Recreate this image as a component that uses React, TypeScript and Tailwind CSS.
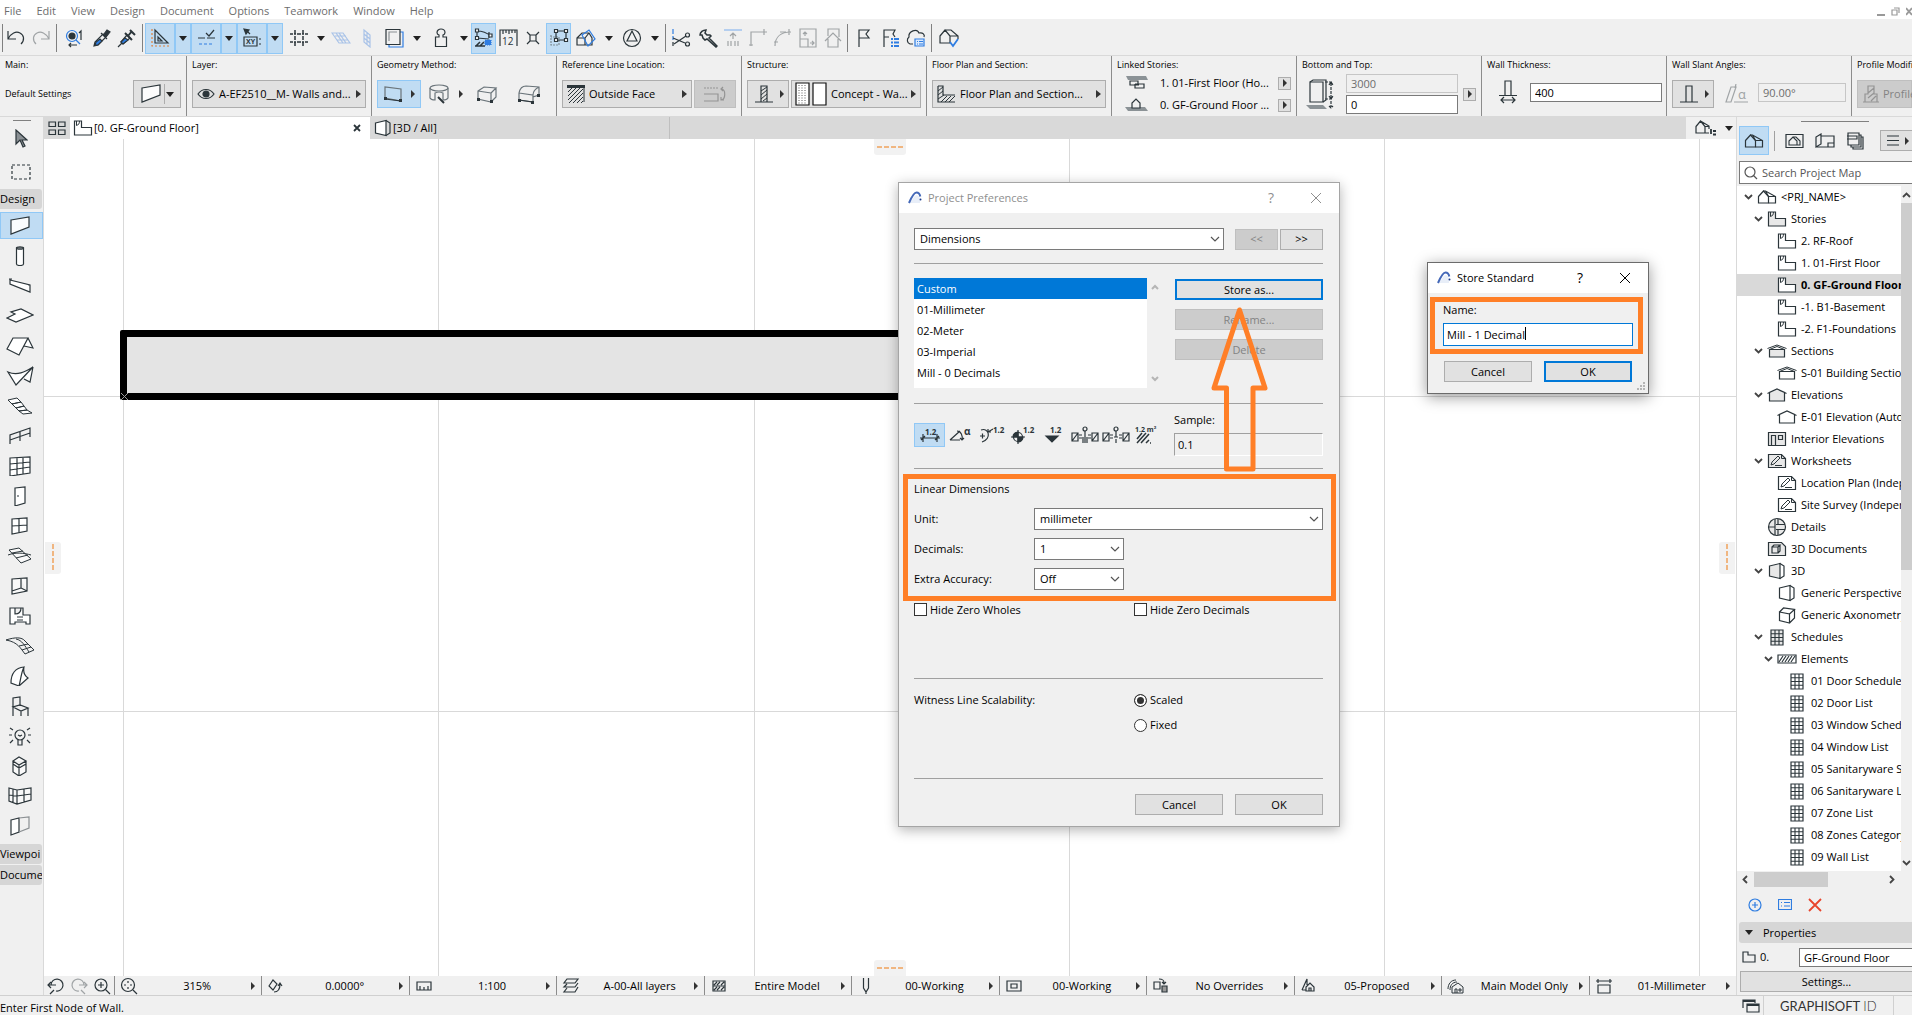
import React, { useState } from 'react';

const INK = '#2b353a';
const BLUE = '#2f7de1';
const PALE = '#a0a4a6';

interface IcoProps {
  w?: number;
  h?: number;
  color?: string;
  children: React.ReactNode;
}

const Ico: React.FC<IcoProps> = ({ w = 22, h = 20, color = INK, children }) => (
  <svg
    width={w}
    height={h}
    viewBox={`0 0 ${w} ${h}`}
    fill="none"
    stroke={color}
    strokeWidth={1.2}
    className="shrink-0"
    aria-hidden="true"
  >
    {children}
  </svg>
);

const Down = () => (
  <Ico w={8} h={5}><path d="M0 0h8L4 5z" fill="#222" stroke="none" /></Ico>
);

const Right = ({ small = false }: { small?: boolean }) => (
  <Ico w={small ? 4 : 5} h={8}><path d={small ? 'M0 0l4 4-4 4z' : 'M0 0l5 4-5 4z'} fill="#333" stroke="none" /></Ico>
);

const Chevron = () => (
  <Ico w={10} h={6} color="#555"><path d="M1 1l4 4 4-4" /></Ico>
);

/* ---------- shared drawings ---------- */

const StoryIcon = ({ shade = false }: { shade?: boolean }) => (
  <Ico w={20} h={18}>
    <path d="M1.500 2h7v6.500h10v7.500h-17z" fill={shade ? '#e8e8e8' : '#fff'} />
    <path d="M3.500 2v4.500c2-.5 3-2 3-4.500" strokeWidth={1} />
  </Ico>
);

const HouseIcon = () => (
  <Ico w={20} h={16}>
    <path d="M1.500 7.500L6.500 2l5 5.500v6.500h-10z" />
    <path d="M6.500 2h2l10 5.500v6.500h-7M8.500 2l3 5.500h7" />
  </Ico>
);

const SectionIcon = ({ shade = false }: { shade?: boolean }) => (
  <Ico w={20} h={16}>
    <path d="M2.500 6.500h15v7.500h-15z" fill={shade ? '#e8e8e8' : '#fff'} />
    <path d="M.5 5.500L10 2l9.500 3.500" strokeWidth={1} />
    <path d="M2.500 6.500L10 3.500l7.500 3" strokeWidth={1} />
  </Ico>
);

const ElevationIcon = ({ shade = false }: { shade?: boolean }) => (
  <Ico w={20} h={16}>
    <path d="M2.500 14V5.500L10 2l7.500 3.500V14z" fill={shade ? '#e8e8e8' : '#fff'} />
    <path d="M.5 6.500l2-1M19.500 6.500l-2-1" />
  </Ico>
);

const InteriorIcon = () => (
  <Ico w={20} h={16}>
    <path d="M1.500 1.500h17v13h-17z" fill="#e8e8e8" />
    <path d="M4.500 14V4.500h4V14M11.500 4.500h4v4h-4z" />
  </Ico>
);

const SheetIcon = ({ shade = false }: { shade?: boolean }) => (
  <Ico w={20} h={16}>
    <path d="M1.500 1.500h13l4 4v9h-17z" fill={shade ? '#e8e8e8' : '#fff'} />
    <path d="M14.500 1.500v4h4M4 12l1-3 6-6 2 2-6 6zM8 12.500h7" strokeWidth={1} />
  </Ico>
);

const DetailIcon = () => (
  <Ico w={20} h={20}>
    <circle cx="10" cy="10" r="8.500" fill="#e8e8e8" />
    <path d="M8 2v16M11 2v5M11 13v5M2 10h6M9 7.500h9M9 12.500h9" />
  </Ico>
);

const Doc3dIcon = () => (
  <Ico w={20} h={16}>
    <path d="M1.500 1.500h13l4 4v9h-17z" fill="#e8e8e8" />
    <path d="M5 6h6v6H5zM5 6l2-2h6l-2 2M13 4v6l-2 2" />
  </Ico>
);

const PerspectiveIcon = ({ shade = false }: { shade?: boolean }) => (
  <Ico w={20} h={18}>
    <path d="M2.500 4L13 1.500v15L2.500 14z" fill={shade ? '#e8e8e8' : '#fff'} />
    <path d="M13 1.500L17 4v10l-4 2.500" />
  </Ico>
);

const AxoIcon = () => (
  <Ico w={20} h={18}>
    <path d="M2.500 6l10 2v9l-10-2.500zM2.500 6l4-4 11 1.500-5 4.500M17.500 3.500V12l-5 5" fill="#fff" />
  </Ico>
);

const TableIcon = ({ shade = false }: { shade?: boolean }) => (
  <Ico w={14} h={17}>
    <path d="M1 1h12v15H1z" fill={shade ? '#e8e8e8' : '#fff'} />
    <path d="M5 1v15M9 1v15M1 4.800h12M1 8.500h12M1 12.200h12" strokeWidth={1.1} />
  </Ico>
);

const HatchIcon = () => (
  <Ico w={20} h={10}>
    <path d="M1 1h18v8H1z" />
    <path d="M2 8l4-6M5 8l4-6M8 8l4-6M11 8l4-6M14 8l4-6" />
  </Ico>
);

const WallIcon = ({ color = INK }: { color?: string }) => (
  <Ico w={22} h={20} color={color}><path d="M2 4l18-3v10L2 18z" fill="#fff" fillOpacity=".9" /></Ico>
);

const LogoIcon = () => (
  <svg width="14" height="14" viewBox="0 0 14 14" fill="none" aria-hidden="true">
    <path d="M2 12h10V8C11 4 8 3 6 6z" fill="#e8eef8" />
    <path d="M1 12C4 5 6 1.500 8.500 1.500S12 4 12.300 5.500" stroke="#4468b8" strokeWidth="2" />
    <circle cx="12.500" cy="8.500" r="1" fill="#1b3a8a" />
  </svg>
);

/* ---------- top toolbar ---------- */

interface Slot {
  name?: string;
  w: string;
  icon: React.ReactNode;
  on?: boolean;
}

const sep = (w: string): Slot => ({ w, icon: <span className="w-px h-7 bg-[#808080]" /> });
const drop = (w: string, on = false): Slot => ({ name: 'More options', w, on, icon: <Down /> });

const toolbar: Slot[] = [
  sep('w-[4px]'),
  { name: 'Undo', w: 'w-[24px]', icon: <Ico><path d="M3 3v8h8M3 11C6 5 11 3 15 5s5 7 1 11" /></Ico> },
  { name: 'Redo', w: 'w-[26px]', icon: <Ico color={PALE}><path d="M19 3v8h-8M19 11C16 5 11 3 7 5S2 12 6 16" /></Ico> },
  sep('w-[4px]'),
  { name: 'Find and select', w: 'w-[32px]', icon: (
    <Ico>
      <circle cx="9" cy="8" r="5.500" stroke={BLUE} />
      <circle cx="9" cy="8" r="3" fill={INK} />
      <path d="M13 12l4 4" stroke={BLUE} />
      <path d="M16 5l2-2v9M6 17h8M8 15l-2 2 2 2" />
    </Ico>
  ) },
  { name: 'Pick up parameters', w: 'w-[24px]', icon: (
    <Ico>
      <path d="M3 18l1-4 8-8 3 3-8 8z" />
      <path d="M4 17l1-3 4-3 2 2-4 4z" fill={BLUE} />
      <path d="M10 5l6 6M13 6l3-4 3 2-4 5z" fill={INK} />
    </Ico>
  ) },
  { name: 'Inject parameters', w: 'w-[26px]', icon: (
    <Ico>
      <path d="M2 19l4-4M5 14l6-7 3 3-7 6z" />
      <path d="M5 14l4-4 3 2-5 4z" fill={BLUE} />
      <path d="M9 5l7 7M12 8l4-5M14 2l5 5" strokeWidth={2} />
    </Ico>
  ) },
  sep('w-[5px]'),
  { name: 'Guide lines', w: 'w-[30px]', on: true, icon: (
    <Ico w={20}>
      <path d="M5 2v13h13zM8 9v4h4z" />
      <path d="M2 1v17h18" stroke="#e0803a" strokeDasharray="2 2" />
    </Ico>
  ) },
  drop('w-[16px]', true),
  { name: 'Snap guides', w: 'w-[30px]', on: true, icon: (
    <Ico w={20}>
      <path d="M2 10h7M11 10h8M10 5l3 3 5-6" />
      <path d="M3 16h14" stroke={BLUE} strokeDasharray="3 2" />
    </Ico>
  ) },
  drop('w-[16px]', true),
  { name: 'Tracker', w: 'w-[30px]', on: true, icon: (
    <Ico w={20}>
      <path d="M2 1l5 1-3 4z" fill={INK} />
      <path d="M5 3l3 3M2 9h13v9H2zM17 11h2M17 16h2" />
      <text x="4" y="16" fontSize="7" fontWeight="bold" fill={INK} stroke="none">XY</text>
    </Ico>
  ) },
  drop('w-[16px]', true),
  { name: 'Grid snap', w: 'w-[32px]', icon: (
    <Ico><path d="M7 2v4M7 8v4M7 14v4M15 2v4M15 8v4M15 14v4M2 6h3M9 6h4M17 6h3M2 14h3M9 14h4M17 14h3M6 6h2M14 6h2M6 14h2M14 14h2" strokeWidth={1.500} /></Ico>
  ) },
  drop('w-[12px]'),
  { name: 'Editing plane', w: 'w-[27px]', icon: (
    <Ico w={20} color="#a9c3e8"><path d="M1 5h11l7 10H8zM4 8h11M6 12h11M5 5l7 10M8 5l7 10" /></Ico>
  ) },
  { name: 'Vertical plane', w: 'w-[25px]', icon: (
    <Ico w={12} color="#a9c3e8"><path d="M3 2l6 5v12l-6-5zM6 4v13M3 6l6 5M3 10l6 5" /></Ico>
  ) },
  { name: 'Trace reference', w: 'w-[30px]', icon: (
    <Ico w={20}>
      <path d="M5 4h14v15H5z" stroke={BLUE} />
      <path d="M2 1.500h14v15H2z" fill="#f0f0f0" />
      <path d="M5 13V4h8" stroke="#8a9094" />
    </Ico>
  ) },
  drop('w-[16px]'),
  { name: 'Gravity', w: 'w-[32px]', icon: (
    <Ico w={16}><path d="M6 9V7C4.500 6.500 4 5.500 4 4.500a4 3.500 0 0 1 8 0c0 1-.5 2-2 2.500v2h3.500v9.500h-11V9z" /></Ico>
  ) },
  drop('w-[14px]'),
  { name: 'Suspend groups', w: 'w-[25px]', on: true, icon: (
    <Ico w={20}>
      <path d="M3 2v8M3 10l12 1M3 3c6 0 9 1 14 5M15 4v6" />
      <path d="M1.500 1h3v3h-3zM1.500 8.500h3v3h-3zM15 6h3v3h-3z" fill="#fff" />
      <path d="M1 18h10M2 18l4-4M6 18l4-4" strokeWidth={1.600} />
      <path d="M11 12h6v5h-6z" fill={BLUE} stroke={BLUE} strokeDasharray="1 1" />
    </Ico>
  ) },
  { name: 'Ruler', w: 'w-[24px]', icon: (
    <Ico w={20}>
      <path d="M19 18V2H2v16M5 2v4M8 2v3M11 2v4M14 2v3M17 2v3" />
      <text x="4" y="17" fontSize="10" fill={INK} stroke="none">12</text>
    </Ico>
  ) },
  { name: 'Snap point', w: 'w-[26px]', icon: (
    <Ico w={14} h={14}><path d="M4 4h6v6H4zM1 1l3 3M13 1l-3 3M1 13l3-3M13 13l-3-3" /></Ico>
  ) },
  { name: 'Element snap', w: 'w-[25px]', on: true, icon: (
    <Ico w={22}>
      <path d="M3 7v10h8V9H3" stroke="#7d8b94" strokeDasharray="2 1" />
      <path d="M8 3h10v9H8z" />
      <path d="M6.500 1.500h3v3h-3zM16.500 1.500h3v3h-3zM6.500 10.500h3v3h-3zM16.500 10.500h3v3h-3z" fill="#fff" />
    </Ico>
  ) },
  { name: 'Visual compare', w: 'w-[30px]', icon: (
    <Ico w={20}>
      <path d="M1 10l5-5h7l3 5v7H1zM1 10h8l4-5M9 10v7" />
      <path d="M6 7l7-5 6 9-7 7z" stroke={BLUE} />
    </Ico>
  ) },
  drop('w-[16px]'),
  { name: 'Set north', w: 'w-[30px]', icon: (
    <Ico w={20}><circle cx="10" cy="10" r="8.500" /><path d="M10 3l5 10H5z" /></Ico>
  ) },
  drop('w-[16px]'),
  sep('w-[4px]'),
  { name: 'Split', w: 'w-[28px]', icon: (
    <Ico w={20}>
      <path d="M2 1v5M2 8v4" stroke={BLUE} />
      <path d="M3 16l12-8M2 10l12 5M2 14v4" />
      <circle cx="16.500" cy="7" r="2" /><circle cx="16.500" cy="16" r="2" />
    </Ico>
  ) },
  { name: 'Adjust', w: 'w-[25px]', icon: (
    <Ico w={20}><path d="M2 7c0-3 3-5 6-5l-1 3 2 2 3 0 1 1-2 2 8 8-1 1-9-8-2 1-2-2-1-3z" strokeWidth={1.500} /></Ico>
  ) },
  { name: 'Elevate', w: 'w-[25px]', icon: (
    <Ico w={20} color={PALE}>
      <path d="M1 2h18" stroke="#8db8ee" />
      <path d="M10 5v6M7 8l3-3 3 3M5 13v5M8 13v5M12 13v5M15 13v5" />
    </Ico>
  ) },
  { name: 'Intersect', w: 'w-[25px]', icon: <Ico w={20} color={PALE}><path d="M3 18V4h16M16 1v6M1 17h4" /></Ico> },
  { name: 'Fillet', w: 'w-[25px]', icon: <Ico w={20} color={PALE}><path d="M2 18C2 9 8 4 18 4M16 1v6M1 14h4M7 4h6" /></Ico> },
  { name: 'Resize', w: 'w-[25px]', icon: <Ico w={20} color={PALE}><path d="M2 1h16v18H2zM2 11h8v8M7 8V4M5 6l2-2 2 2M12 15h4M14 13l2 2-2 2" /></Ico> },
  { name: 'Trim to roof', w: 'w-[25px]', icon: <Ico w={20} color={PALE}><path d="M2 13l8-8 8 8M5 11v8h10v-8M5 8V1h11v8" /></Ico> },
  sep('w-[5px]'),
  { name: 'Markup', w: 'w-[28px]', icon: <Ico w={14}><path d="M2 19V2h10L9 6l3 4H2" /></Ico> },
  { name: 'Markup list', w: 'w-[25px]', icon: (
    <Ico w={18}>
      <path d="M2 19V2h11l-2 4 2 3M2 9h5" />
      <path d="M9 11h2M12 11h5M9 14.500h2M12 14.500h5M9 18h2M12 18h5" stroke={BLUE} strokeWidth={2} />
    </Ico>
  ) },
  { name: 'Teamwork', w: 'w-[26px]', icon: (
    <Ico w={20}>
      <path d="M7 16H4a4 4 0 0 1-1-7c-1-6 8-9 10-4 4-1 6 2 5 4" />
      <path d="M9 11h9v7H9zM11 13.500h1M13 13.500h4M11 16h1M13 16h4" stroke={BLUE} fill="#dceafc" />
    </Ico>
  ) },
  sep('w-[5px]'),
  { name: 'Check model', w: 'w-[29px]', icon: (
    <Ico w={20}>
      <path d="M1 8l5-6 5 6v7H1zM6 2h6l7 6v3M11 8h8" />
      <path d="M11 14l3 4 5-7" stroke={BLUE} strokeWidth={1.800} />
    </Ico>
  ) },
];

const TopToolbar: React.FC = () => (
  <div className="h-9 pt-[2px] shrink-0 flex items-center bg-[#f0f0f0] overflow-hidden">
    {toolbar.map((slot, i) =>
      slot.name ? (
        <button
          key={i}
          aria-label={slot.name}
          className={`${slot.w} h-[31px] shrink-0 flex items-center justify-center ${
            slot.on ? 'bg-[#c0dcf3] border border-[#90c8f6]' : ''
          }`}
        >
          {slot.icon}
        </button>
      ) : (
        <span key={i} className={`${slot.w} shrink-0 flex items-center justify-center`}>{slot.icon}</span>
      )
    )}
  </div>
);

/* ---------- info box ---------- */

const Section: React.FC<{ label: string; w?: string; children: React.ReactNode }> = ({ label, w = 'w-[185px]', children }) => (
  <div className={`${w} shrink-0 h-full flex flex-col border-l border-[#8c8c8c] pl-[5px] overflow-hidden`}>
    <div className="h-[16px] pt-[2px] text-[9px] leading-[14px] whitespace-nowrap shrink-0">{label}</div>
    <div className="flex-1 flex items-center">{children}</div>
  </div>
);

const box = 'h-7 shrink-0 flex items-center border border-[#adadad] bg-[#e1e1e1]';

const InfoBox: React.FC = () => (
  <div className="h-[62px] shrink-0 flex bg-[#f0f0f0] border-y border-[#d9d9d9] overflow-hidden">
    <Section label="Main:" w="w-[186px] border-l-0">
      <span className="text-[9px] flex-1 whitespace-nowrap">Default Settings</span>
      <button aria-label="Wall settings" className={`${box} w-12 mr-[5px] justify-between px-[6px]`}>
        <WallIcon />
        <span className="w-px h-5 bg-[#adadad]" />
        <Down />
      </button>
    </Section>
    <Section label="Layer:">
      <button className={`${box} w-[174px] px-1`}>
        <Ico w={18} h={12}>
          <path d="M1 6c4-6 12-6 16 0-4 6-12 6-16 0z" /><circle cx="9" cy="6" r="3" fill={INK} />
        </Ico>
        <span className="flex-1 text-left pl-1 whitespace-nowrap">A-EF2510__M- Walls and...</span>
        <Right />
      </button>
    </Section>
    <Section label="Geometry Method:">
      <div className="flex items-center gap-2">
        <button aria-label="Straight" className="w-11 h-7 flex items-center justify-center gap-2 bg-[#c0dcf3] border border-[#90c8f6]">
          <Ico w={20} h={18} color="#6a747a">
            <path d="M2 13V2l16 2v12z" /><path d="M2 14l16 2" stroke={INK} />
            <path d="M1 12h3v3H1zM16 14h3v3h-3z" fill={INK} stroke="none" />
          </Ico>
          <Right small />
        </button>
        <button aria-label="Curved" className="w-[34px] h-7 flex items-center justify-between">
          <Ico w={20} h={20} color="#6a747a">
            <ellipse cx="10" cy="4" rx="9" ry="3" />
            <path d="M1 4v10c1 2 3 2 5 2V9c2-1 6-1 8 0v7c2 0 4 0 5-2V4" />
            <path d="M9 13l3 3 3 3" stroke={INK} strokeWidth={2} />
          </Ico>
          <Right small />
        </button>
        <button aria-label="Rectangular" className="w-8 h-7 flex items-center justify-center">
          <Ico w={22} h={18} color="#6a747a">
            <path d="M2 6l6-4 12 1-5 5v9L2 14zM2 6l13 2M20 3v9l-5 5" />
            <path d="M1 13h3v3H1zM14 15h3v3h-3z" fill={INK} stroke="none" />
          </Ico>
        </button>
        <button aria-label="Chained" className="w-9 h-7 flex items-center justify-center">
          <Ico w={24} h={20} color="#6a747a">
            <path d="M2 16V9c1-5 3-7 7-7l13 1v8l-6 2v5zM2 9l14 2c0-4 2-6 6-8M16 11v7" />
            <path d="M2 16l14 2" stroke={INK} />
            <path d="M1 15h3v3H1zM14 17h3v3h-3zM20 10h3v3h-3z" fill={INK} stroke="none" />
          </Ico>
        </button>
      </div>
    </Section>
    <Section label="Reference Line Location:" w="w-[185px]">
      <button className={`${box} w-[130px] px-1`}>
        <Ico w={18} h={18}>
          <path d="M0 1.500h18" strokeWidth={3} /><path d="M17 1v16" strokeWidth={1} />
          <path d="M1 7l4-4M1 11l8-8M1 15l12-12M2 18L16 4M6 18L16 8M10 18l6-6M14 18l2-2" strokeWidth={1} />
        </Ico>
        <span className="flex-1 text-left pl-1">Outside Face</span>
        <Right />
      </button>
      <button aria-label="Flip" disabled className="ml-[2px] w-[42px] h-7 bg-[#cccccc] border border-[#bfbfbf] flex items-center justify-center">
        <Ico w={24} h={18} color="#949494"><path d="M1 3h14" strokeDasharray="2 1" /><path d="M1 9h14v7H1M18 4c5 0 5 10 0 11M20 2l-2 2 2 2M18 12v3h3" /></Ico>
      </button>
    </Section>
    <Section label="Structure:" w="w-[185px]">
      <button aria-label="Basic wall" className={`${box} w-[42px] justify-between pl-[7px] pr-1`}>
        <Ico w={18} h={18}><path d="M0 17h18M6 17V1h6v16" /><path d="M6 6l6-4M6 10l6-5M6 14l6-5M8 16l4-3" strokeWidth={1} /></Ico>
        <Right small />
      </button>
      <button className={`${box} ml-[2px] w-[130px] pl-[3px] pr-1`}>
        <Ico w={32} h={24} color="#111">
          <path d="M1 1h13v22H1z" fill="#fff" />
          <path d="M4 3v19M7 3v19M10 3v19" stroke="#777" strokeDasharray="1 1.500" />
          <path d="M18 1h13v22H18z" fill="#fff" />
        </Ico>
        <span className="flex-1 text-left pl-1 whitespace-nowrap">Concept - Wa...</span>
        <Right />
      </button>
    </Section>
    <Section label="Floor Plan and Section:">
      <button className={`${box} w-[174px] px-1`}>
        <Ico w={18} h={18}><path d="M1 1h5v9h12M1 1v16h17" /><path d="M1 6l5-4M1 10l5-4M1 14l6-4M4 17l6-6M8 17l6-6M12 17l6-6" strokeWidth={1} /></Ico>
        <span className="flex-1 text-left pl-[5px] whitespace-nowrap">Floor Plan and Section...</span>
        <Right />
      </button>
    </Section>
    <Section label="Linked Stories:">
      <div className="flex-1 flex flex-col gap-2 pl-2 pr-[5px]">
        <div className="flex items-center h-[14px]">
          <Ico w={24} h={14}>
            <path d="M1 0h20l2 4H3z" fill="#8b9296" stroke="none" /><path d="M14 9H5V5h8v3M10 8h9v4h-9V8" fill="#f0f0f0" />
          </Ico>
          <span className="flex-1 pl-[11px] whitespace-nowrap">1. 01-First Floor (Ho...</span>
          <button aria-label="Top story" className="w-[13px] h-[13px] border border-[#adadad] bg-[#e1e1e1] flex items-center justify-center"><Right small /></button>
        </div>
        <div className="flex items-center h-[14px]">
          <Ico w={24} h={14}>
            <path d="M0 9h20l3 4H3z" fill="#8b9296" stroke="none" /><path d="M7 10V5l4-4 4 4v5z" fill="#f0f0f0" />
          </Ico>
          <span className="flex-1 pl-[11px] whitespace-nowrap">0. GF-Ground Floor ...</span>
          <button aria-label="Home story" className="w-[13px] h-[13px] border border-[#adadad] bg-[#e1e1e1] flex items-center justify-center"><Right small /></button>
        </div>
      </div>
    </Section>
    <Section label="Bottom and Top:">
      <div className="flex items-center pl-1">
        <Ico w={32} h={32}>
          <path d="M4 4h13v20H4z" /><path d="M4 4l3-2h13v20l-3 2" />
          <path d="M19 4h8M19 21h8M25 5v15M23 7l2-3 2 3M23 18l2 3 2-3M25 23v6M23 28l2 2 2-2" strokeDasharray="3 1" />
          <path d="M0 27h17l4 4H4z" fill="#8b9296" stroke="none" />
        </Ico>
        <div className="flex flex-col gap-[2px] pl-2">
          <input aria-label="Wall height" disabled defaultValue="3000" className="w-28 h-[19px] px-1 border border-[#c6c6c6] bg-[#f0f0f0] text-[#6d6d6d]" />
          <input aria-label="Base offset" defaultValue="0" className="w-28 h-[19px] px-1 border border-[#7a7a7a] bg-white" />
        </div>
        <button aria-label="Height options" className="ml-[5px] w-[13px] h-[13px] border border-[#adadad] bg-[#e1e1e1] flex items-center justify-center"><Right small /></button>
      </div>
    </Section>
    <Section label="Wall Thickness:">
      <div className="flex items-center pl-3 pb-1">
        <Ico w={18} h={24}><path d="M6 15V1h6v14M0 15.500h18M2 20h14M5 17l-3 3 3 3M13 17l3 3-3 3" /></Ico>
        <input aria-label="Thickness" defaultValue="400" className="ml-[13px] w-[132px] h-[19px] px-1 border border-[#7a7a7a] bg-white" />
      </div>
    </Section>
    <Section label="Wall Slant Angles:">
      <button aria-label="Slant type" className={`${box} w-[42px] justify-between pl-[7px] pr-1`}>
        <Ico w={18} h={18}><path d="M0 17h18M6 17V1h6v16" /></Ico>
        <Right small />
      </button>
      <Ico w={44} h={20} color={PALE}>
        <path d="M12 18l5-15h5l-5 15zM22 0l-1 4M20 18h14" />
        <text x="24" y="15" fontSize="13" fill={PALE} stroke="none">α</text>
      </Ico>
      <input aria-label="Slant angle" disabled defaultValue="90.00°" className="w-[88px] h-[19px] mb-1 px-1 border border-[#c6c6c6] bg-[#f0f0f0] text-[#6d6d6d]" />
    </Section>
    <Section label="Profile Modifiers:" w="flex-1">
      <button disabled className="w-full h-7 shrink-0 flex items-center bg-[#cccccc] border border-[#bfbfbf] text-[#838383] pl-[5px] gap-1">
        <Ico w={16} h={18} color="#949494"><path d="M0 17h16M2 17V9h3V1h6v8h3v8M5 8l6-5M5 13l6-5M8 16l5-5" /></Ico>
        Profile
      </button>
    </Section>
  </div>
);

/* ---------- toolbox ---------- */

const tools: { name: string; icon: React.ReactNode }[] = [
  { name: 'Wall', icon: <WallIcon /> },
  { name: 'Column', icon: <Ico><path d="M7.500 2v16c0 2 7 2 7 0V2z" fill="#fff" /><ellipse cx="11" cy="2" rx="3.500" ry="1.200" /></Ico> },
  { name: 'Beam', icon: <Ico><path d="M1 4l20 5v7L1 8zM0 3h3M21 9h-2" fill="#fff" /></Ico> },
  { name: 'Slab', icon: <Ico w={28}><path d="M1 12l8-4-4-2 10-3 12 6-17 7z" fill="#fff" /></Ico> },
  { name: 'Roof', icon: <Ico w={28}><path d="M7 2h15l-9 17L1 13zM22 2l5 10-9-2" fill="#fff" /></Ico> },
  { name: 'Shell', icon: <Ico w={28}><path d="M2 6c9 4 17 0 25-5L10 19zM27 1l-3 15-6-3" fill="#fff" /></Ico> },
  { name: 'Stair', icon: <Ico w={26} h={18}><path d="M1 3l9-2 4 4-9 2zM5 7l9-2 3 4-8 2zM9 11l8-2 3 4-8 1zM12 14l8-1 5 3-9 1z" fill="#fff" strokeWidth={1} /></Ico> },
  { name: 'Railing', icon: <Ico><path d="M1 18V9l20-7v9M1 14l20-7M11 5v10" /></Ico> },
  { name: 'Curtain Wall', icon: <Ico><path d="M1 2l20-1v16L1 20zM8 2v17M14 1v17M1 8l20-2M1 14l20-3" fill="#fff" /></Ico> },
  { name: 'Door', icon: <Ico><path d="M6 2l10-1v16L6 20zM8 10h2" fill="#fff" /></Ico> },
  { name: 'Window', icon: <Ico><path d="M3 3l15-1v13L3 18zM10 2v15M3 10l15-1" fill="#fff" /></Ico> },
  { name: 'Skylight', icon: <Ico w={26}><path d="M2 4l10-2 12 11-10 4zM1 9c8-3 16-2 23 0" fill="#fff" fillOpacity=".6" strokeWidth={1} /><path d="M5 7l11-2M9 12l12-3" strokeWidth={1} /></Ico> },
  { name: 'Opening', icon: <Ico><path d="M3 3l15-1v13L3 18zM12 3v9l6 3M12 12l-9 3" fill="#fff" fillOpacity=".6" /></Ico> },
  { name: 'Zone', icon: <Ico><path d="M1 2h5v6c4 0 6-2 6-6h2v7h7v9h-4v-2H6v2H1zM6 2h6M8 11h6M8 14h6" fill="#fff" /></Ico> },
  { name: 'Mesh', icon: <Ico w={30} h={18}><path d="M1 3c9-3 16-3 19 1l9 9-9 4c-4-5-7-12-19-14zM14 9l9-2M17 13l9-3M11 2c6 1 9 7 13 13" strokeWidth={1} /></Ico> },
  { name: 'Morph', icon: <Ico><path d="M2 17C2 7 6 2 15 1c-3 6-3 12-5 19zM15 1c-1 5 1 9 4 11l-9 8" fill="#fff" /></Ico> },
  { name: 'Object', icon: <Ico><path d="M4 20V2l7-1v9M4 11l8 4 7-3-8-3zM12 15v6M19 12v8" /></Ico> },
  { name: 'Lamp', icon: <Ico><circle cx="11" cy="9" r="5" /><path d="M9 14v5h4v-5M9 9l2 1 2-1M1 2l3 2M21 2l-3 2M0 9h3M22 9h-3M1 17l3-3M21 17l-3-3" /></Ico> },
  { name: 'Equipment', icon: <Ico><path d="M4 5l6-4 7 4-7 4zM4 5v11l6 4 7-4V5M10 9v11M4 8l6 4 7-4" fill="#fff" fillOpacity=".6" /></Ico> },
  { name: 'Curtain', icon: <Ico w={24} h={18}><path d="M1 1l8 2 14-2v12L9 17l-8-3zM9 3v14M5 2v13M16 2v13M1 8l8 1 14-2" fill="#fff" fillOpacity=".6" /></Ico> },
  { name: 'Wall End', icon: <Ico><path d="M2 4l8-2v14l-8 3z" fill="#fff" /><path d="M10 2l10-1v11l-10 4" stroke="#8a8f92" /></Ico> },
];

const Toolbox: React.FC = () => (
  <aside className="w-11 shrink-0 bg-[#f0f0f0] border-r border-[#d9d9d9] flex flex-col overflow-hidden">
    <div className="h-[7px] flex items-center justify-center shrink-0"><span className="w-[18px] h-px bg-[#808080]" /></div>
    <button aria-label="Arrow" className="h-[30px] pr-[2px] shrink-0 flex items-center justify-center">
      <Ico w={14} h={20}><path d="M2 1v14l4-4 3 7 2-1-3-6h5z" fill="#8a9094" /></Ico>
    </button>
    <button aria-label="Marquee" className="h-[35px] pr-[2px] shrink-0 flex items-center justify-center">
      <Ico><path d="M2 3h18v14H2z" strokeDasharray="3 2" /></Ico>
    </button>
    <button className="h-5 mr-px shrink-0 bg-[#d6d6d6] rounded-r-[3px] text-left">Design</button>
    <div className="flex flex-col gap-[3px] pt-[3px] pb-[5px] shrink-0">
      {tools.map((tool, i) => (
        <button
          key={tool.name}
          aria-label={tool.name}
          className={`h-[27px] flex items-center justify-center pr-[3px] ${i === 0 ? 'bg-[#c0dcf3] border border-[#90c8f6]' : ''}`}
        >
          {tool.icon}
        </button>
      ))}
    </div>
    <button className="h-5 mr-px shrink-0 bg-[#d6d6d6] rounded-r-[3px] text-left overflow-hidden">Viewpoi</button>
    <button className="h-5 mr-px mt-px shrink-0 bg-[#d6d6d6] rounded-r-[3px] text-left overflow-hidden">Docume</button>
  </aside>
);

/* ---------- drawing area ---------- */

const TabBar: React.FC = () => (
  <div className="h-[22px] shrink-0 flex bg-[#d9d9d9]">
    <button aria-label="Tab overview" className="w-[26px] flex items-center justify-center">
      <Ico w={18} h={15}><path d="M1 1h6.500v4.500H1zM10.500 1H17v4.500h-6.500zM1 9h6.500v4.500H1zM10.500 9H17v4.500h-6.500z" /></Ico>
    </button>
    <div className="w-[300px] bg-white flex items-center pl-[3px] pr-1">
      <StoryIcon />
      <span className="flex-1 pl-px">[0. GF-Ground Floor]</span>
      <button aria-label="Close tab" className="w-[18px] flex items-center justify-center">
        <Ico w={8} h={8}><path d="M1 1l6 6M7 1L1 7" strokeWidth={1.800} /></Ico>
      </button>
    </div>
    <div className="w-[300px] flex items-center pl-[3px] border-r border-[#bfbfbf]">
      <PerspectiveIcon /><span>[3D / All]</span>
    </div>
    <div className="flex-1" />
    <div className="w-[50px] bg-[#f0f0f0] flex items-center justify-end gap-2 pr-[3px]">
      <Ico w={22} h={16}>
        <path d="M1 6.500L5.500 1l4.500 5.500V13H1zM5.500 1L14 6v3M10 6.500h4M10 13h4" />
        <path d="M16 9v5M18 11h3M18 14.500h3" strokeWidth={1.800} />
      </Ico>
      <Down />
    </div>
  </div>
);

const vLines = ['left-[79px]', 'left-[394px]', 'left-[710px]', 'left-[1025px]', 'left-[1340px]', 'left-[1655px]'];
const hLines = ['top-[257px]', 'top-[572px]'];

const GripX = () => (
  <svg width="27" height="2" viewBox="0 0 27 2" aria-hidden="true">
    <path d="M0 1h27" stroke="#efa25c" strokeWidth="1.500" strokeDasharray="5 2" />
  </svg>
);

const GripY = () => (
  <svg width="2" height="27" viewBox="0 0 2 27" aria-hidden="true">
    <path d="M1 0v27" stroke="#efa25c" strokeWidth="1.500" strokeDasharray="5 2" />
  </svg>
);

const Canvas: React.FC = () => (
  <div className="relative flex-1 bg-white overflow-hidden">
    {vLines.map((c) => <span key={c} className={`absolute inset-y-0 w-px bg-[#d9d9d9] ${c}`} />)}
    {hLines.map((c) => <span key={c} className={`absolute inset-x-0 h-px bg-[#d9d9d9] ${c}`} />)}
    <div className="absolute left-[76px] top-[191px] w-[900px] h-[70px] border-[7px] border-black bg-[#e4e4e4] rounded-[2px]" />
    <svg className="absolute left-[76px] top-[253px]" width="9" height="9" viewBox="0 0 9 9" stroke="#999">
      <path d="M1 1l7 7M8 1L1 8" />
    </svg>
    <span className="absolute left-1/2 -ml-4 top-0 w-8 h-4 bg-[#f2f2f2] rounded-b-[3px] flex items-center justify-center"><GripX /></span>
    <span className="absolute left-1/2 -ml-4 bottom-0 w-8 h-4 bg-[#f2f2f2] rounded-t-[3px] flex items-center justify-center"><GripX /></span>
    <span className="absolute left-px top-1/2 -mt-4 w-4 h-8 bg-[#f2f2f2] rounded-r-[3px] flex items-center justify-center"><GripY /></span>
    <span className="absolute right-px top-1/2 -mt-4 w-4 h-8 bg-[#f2f2f2] rounded-l-[3px] flex items-center justify-center"><GripY /></span>
  </div>
);

const quick: { text: string; icon: React.ReactNode }[] = [
  { text: '315%', icon: <Ico w={18} h={18}><circle cx="8" cy="8" r="6.500" /><path d="M13 13l4 4M8 4v2M8 10v2M4 8h2M10 8h2" /></Ico> },
  { text: '0.0000°', icon: <Ico w={16} h={16}><path d="M1 8l4-6 4 4-4 6zM6 14c4 0 6-3 6-8M10 8l2-3 2 3" /></Ico> },
  { text: '1:100', icon: <Ico w={16} h={10}><path d="M1 1h14v8H1zM4 9V5M8 9V6M12 9V5" /></Ico> },
  { text: 'A-00-All layers', icon: <Ico w={18} h={16}><path d="M5 1h11l-3 4H2zM5 6l-3 3h11l3-4M5 10l-3 4h11l3-5" /></Ico> },
  { text: 'Entire Model', icon: <Ico w={14} h={12}><path d="M1 1h12v10H1zM1 6h12M2 5l3-3M5 5l3-3M9 5l3-3M2 10l3-3M5 10l3-3M9 10l3-3" /></Ico> },
  { text: '00-Working', icon: <Ico w={10} h={16}><path d="M2.500 0v10l2.500 4 2.500-4V0M5 14v2" /></Ico> },
  { text: '00-Working', icon: <Ico w={16} h={12}><path d="M1 1h14v10H1zM5 4h6v4H5z" /></Ico> },
  { text: 'No Overrides', icon: <Ico w={16} h={16}><path d="M1 4h6v7H1zM6 1c4 0 5 1 5 4M9 4l2 2 2-2" /><path d="M9 8h5v6H9z" fill="#999" /></Ico> },
  { text: '05-Proposed', icon: <Ico w={16} h={16}><path d="M1 12L6 1v6M5 13V9l4-4 4 4v4zM1 12h4M8 13v-3h2v3" /></Ico> },
  { text: 'Main Model Only', icon: <Ico w={18} h={16}><path d="M1 11C1 6 4 2 9 2M3 12c0-4 2-8 7-8M5 15V9l6-4 5 4v6zM8 15v-4h2v4M12 11h2v2h-2z" strokeWidth={1} /></Ico> },
  { text: '01-Millimeter', icon: <Ico w={16} h={16}><path d="M0 3h16M2 1v4M14 1v4M2 7h12v8H2z" /></Ico> },
];

const QuickOptions: React.FC = () => (
  <div className="h-[19px] shrink-0 flex bg-[#f0f0f0]">
    <div className="w-[70px] shrink-0 flex items-center justify-around">
      <button aria-label="Previous zoom"><Ico w={18} h={18}><path d="M4 8a6 6 0 1 1 5 6M1 8h8M4 5L1 8l3 3M7 13l-4 4" /></Ico></button>
      <button aria-label="Next zoom"><Ico w={18} h={18} color={PALE}><path d="M14 8a6 6 0 1 0-5 6M17 8H9M14 5l3 3-3 3M11 13l4 4" /></Ico></button>
      <button aria-label="Zoom in"><Ico w={18} h={18}><circle cx="8" cy="8" r="6" /><path d="M12.500 12.500L17 17M5 8h6M8 5v6" /></Ico></button>
    </div>
    {quick.map((q, i) => (
      <button key={i} className="flex-1 flex items-center border-l border-[#8c8c8c] pr-[6px]">
        <span className="w-7 flex justify-center">{q.icon}</span>
        <span className="flex-1 text-center whitespace-nowrap">{q.text}</span>
        <Right small />
      </button>
    ))}
  </div>
);

/* ---------- navigator ---------- */

interface TreeRow {
  text: string;
  depth: number;
  open?: boolean;
  selected?: boolean;
  icon: React.ReactNode;
}

const tree: TreeRow[] = [
  { text: '<PRJ_NAME>', depth: 0, open: true, icon: <HouseIcon /> },
  { text: 'Stories', depth: 1, open: true, icon: <StoryIcon shade /> },
  { text: '2. RF-Roof', depth: 2, icon: <StoryIcon /> },
  { text: '1. 01-First Floor', depth: 2, icon: <StoryIcon /> },
  { text: '0. GF-Ground Floor', depth: 2, selected: true, icon: <StoryIcon /> },
  { text: '-1. B1-Basement', depth: 2, icon: <StoryIcon /> },
  { text: '-2. F1-Foundations', depth: 2, icon: <StoryIcon /> },
  { text: 'Sections', depth: 1, open: true, icon: <SectionIcon shade /> },
  { text: 'S-01 Building Section', depth: 2, icon: <SectionIcon /> },
  { text: 'Elevations', depth: 1, open: true, icon: <ElevationIcon shade /> },
  { text: 'E-01 Elevation (Auto)', depth: 2, icon: <ElevationIcon /> },
  { text: 'Interior Elevations', depth: 1, icon: <InteriorIcon /> },
  { text: 'Worksheets', depth: 1, open: true, icon: <SheetIcon shade /> },
  { text: 'Location Plan (Independent)', depth: 2, icon: <SheetIcon /> },
  { text: 'Site Survey (Independent)', depth: 2, icon: <SheetIcon /> },
  { text: 'Details', depth: 1, icon: <DetailIcon /> },
  { text: '3D Documents', depth: 1, icon: <Doc3dIcon /> },
  { text: '3D', depth: 1, open: true, icon: <PerspectiveIcon shade /> },
  { text: 'Generic Perspective', depth: 2, icon: <PerspectiveIcon /> },
  { text: 'Generic Axonometry', depth: 2, icon: <AxoIcon /> },
  { text: 'Schedules', depth: 1, open: true, icon: <TableIcon shade /> },
  { text: 'Elements', depth: 2, open: true, icon: <HatchIcon /> },
  { text: '01 Door Schedule', depth: 3, icon: <TableIcon /> },
  { text: '02 Door List', depth: 3, icon: <TableIcon /> },
  { text: '03 Window Schedule', depth: 3, icon: <TableIcon /> },
  { text: '04 Window List', depth: 3, icon: <TableIcon /> },
  { text: '05 Sanitaryware Schedule', depth: 3, icon: <TableIcon /> },
  { text: '06 Sanitaryware List', depth: 3, icon: <TableIcon /> },
  { text: '07 Zone List', depth: 3, icon: <TableIcon /> },
  { text: '08 Zones Category', depth: 3, icon: <TableIcon /> },
  { text: '09 Wall List', depth: 3, icon: <TableIcon /> },
  { text: '', depth: 3, icon: <TableIcon /> },
];

const indent = ['pl-[7px]', 'pl-[17px]', 'pl-[27px]', 'pl-[37px]'];

const Navigator: React.FC = () => (
  <aside className="w-44 shrink-0 bg-[#f0f0f0] border-l border-[#d9d9d9] flex flex-col overflow-hidden">
    <div className="h-[9px] shrink-0 flex items-center justify-center pl-5"><span className="w-[68px] h-px bg-[#808080]" /></div>
    <div className="h-[29px] shrink-0 flex items-center pl-[2px]">
      <button aria-label="Project map" className="w-[30px] h-[29px] shrink-0 bg-[#c0dcf3] border border-[#90c8f6] flex items-center justify-center"><HouseIcon /></button>
      <span className="w-px h-5 shrink-0 bg-[#a0a0a0] mx-[5px]" />
      <button aria-label="View map" className="w-[30px] shrink-0 flex justify-center">
        <Ico w={20} h={16}><path d="M1 1.500h17v13H1z" /><path d="M4 8l4-4 4 4v4H4zM8 4h3l4 4v4h-3" strokeWidth={1.100} /></Ico>
      </button>
      <button aria-label="Layout book" className="w-[30px] shrink-0 flex justify-center">
        <Ico w={20} h={16}><path d="M1 14V4l5-3v10zM6 3h13v11H1M13 14v-4h6" /></Ico>
      </button>
      <button aria-label="Publisher" className="w-[30px] shrink-0 flex justify-center">
        <Ico w={18} h={18}><path d="M2 1h11v12H2zM1 4h10v3H1M13 3h2v12H5v-2M15 5h2v12H7v-2" /></Ico>
      </button>
      <button aria-label="Navigator menu" className="ml-[10px] w-10 h-[21px] shrink-0 bg-[#e1e1e1] border border-[#adadad] flex items-center gap-[6px] pl-[6px]">
        <Ico w={12} h={11}><path d="M0 1h12M0 5.500h12M0 10h12" /></Ico>
        <Right small />
      </button>
    </div>
    <label className="mt-[6px] ml-[2px] h-[23px] shrink-0 bg-white border border-r-0 border-[#7a7a7a] flex items-center pl-1">
      <Ico w={14} h={14} color="#555"><circle cx="6" cy="6" r="5" /><path d="M9.500 9.500L13 13" /></Ico>
      <input placeholder="Search Project Map" className="w-full pl-1 placeholder:text-[#555555] outline-none" />
    </label>
    <div className="flex-1 min-h-0 flex mt-[2px]">
      <div role="tree" className="flex-1 min-w-0 bg-white overflow-hidden">
        {tree.map((row, i) => (
          <div
            key={i}
            role="treeitem"
            aria-selected={!!row.selected}
            className={`h-[22px] flex items-center whitespace-nowrap ${indent[row.depth]} ${row.selected ? 'bg-[#d9d9d9] font-bold' : ''}`}
          >
            <span className="w-[13px] shrink-0">
              {row.open && <Ico w={9} h={6} color="#444"><path d="M1 1l3.500 3.500L8 1" strokeWidth={1.800} /></Ico>}
            </span>
            <span className="w-5 shrink-0 flex justify-center">{row.icon}</span>
            <span className="pl-1">{row.text}</span>
          </div>
        ))}
      </div>
      <div className="w-[11px] shrink-0 flex flex-col items-center overflow-hidden">
        <span className="h-[17px] flex items-center"><Ico w={9} h={6} color="#444"><path d="M1 5l3.500-3.500L8 5" strokeWidth={1.800} /></Ico></span>
        <span className="w-full h-[367px] bg-[#cdcdcd]" />
        <span className="flex-1" />
        <span className="h-[17px] flex items-center"><Ico w={9} h={6} color="#444"><path d="M1 1l3.500 3.500L8 1" strokeWidth={1.800} /></Ico></span>
      </div>
    </div>
    <div className="h-[15px] mt-px shrink-0 flex items-center pl-[5px]">
      <Ico w={6} h={9} color="#444"><path d="M5 1L1.500 4.500 5 8" strokeWidth={1.800} /></Ico>
      <span className="w-[74px] h-full bg-[#cdcdcd] ml-[6px]" />
      <span className="flex-1" />
      <Ico w={6} h={9} color="#444"><path d="M1 1l3.500 3.500L1 8" strokeWidth={1.800} /></Ico>
      <span className="w-[17px]" />
    </div>
    <div className="h-[35px] shrink-0 flex items-center gap-4 pl-[11px]">
      <button aria-label="New item"><Ico w={14} h={14} color={BLUE}><circle cx="7" cy="7" r="6" /><path d="M4 7h6M7 4v6" /></Ico></button>
      <button aria-label="Item settings"><Ico w={14} h={11} color={BLUE}><path d="M.5.5h13v10H.5zM3 3.500h1M3 7h1M6 3.500h6M6 7h6" /></Ico></button>
      <button aria-label="Delete item"><Ico w={14} h={14} color="#e8452c"><path d="M1 1l12 12M13 1L1 13" strokeWidth={1.800} /></Ico></button>
    </div>
    <button className="h-[21px] ml-[2px] shrink-0 bg-[#d6d6d6] rounded-l-[3px] flex items-center pl-[6px] gap-[10px]">
      <Down />Properties
    </button>
    <div className="h-7 shrink-0 flex items-center pl-[5px]">
      <Ico w={14} h={12}><path d="M1 1h5v3h7v7H1z" /></Ico>
      <label htmlFor="story-name" className="w-[43px] shrink-0 pl-1">0.</label>
      <input id="story-name" defaultValue="GF-Ground Floor" className="w-full min-w-0 h-[19px] px-1 bg-white border border-r-0 border-[#7a7a7a]" />
    </div>
    <button className="h-[21px] ml-[3px] mb-[3px] shrink-0 bg-[#e1e1e1] border border-r-0 border-[#adadad] leading-[19px]">Settings...</button>
  </aside>
);

/* ---------- dialogs ---------- */

const btn = 'h-[21px] border border-[#adadad] bg-[#e1e1e1]';
const btnOff = 'h-[21px] border border-[#bfbfbf] bg-[#cccccc] text-[#838383]';
const btnDefault = 'h-[21px] border-2 border-[#0078d7] bg-[#e1e1e1]';

interface PickProps {
  id: string;
  value: string;
  w: string;
}

const Pick: React.FC<PickProps> = ({ id, value, w }) => (
  <span className={`relative ${w} h-[22px] shrink-0`}>
    <select id={id} aria-label={id} className="w-full h-full appearance-none border border-[#7a7a7a] bg-white pl-[5px]">
      <option>{value}</option>
    </select>
    <span className="absolute right-1 inset-y-0 flex items-center pointer-events-none"><Chevron /></span>
  </span>
);

const Rule = () => <div className="h-px shrink-0 bg-[#a0a0a0]" />;

const DialogTitle: React.FC<{ title: string; faded?: boolean }> = ({ title, faded }) => (
  <div className={`h-[30px] shrink-0 bg-white flex items-center pl-[9px] pr-[17px] ${faded ? 'text-[#8f8f8f]' : 'text-black'}`}>
    <LogoIcon />
    <span className="flex-1 pl-[6px]">{title}</span>
    <button aria-label="Help" className="text-sm mr-9">?</button>
    <button aria-label="Close">
      <svg width="12" height="12" viewBox="0 0 12 12" stroke="currentColor" aria-hidden="true"><path d="M1 1l10 10M11 1L1 11" /></svg>
    </button>
  </div>
);

const standards = ['Custom', '01-Millimeter', '02-Meter', '03-Imperial', 'Mill - 0 Decimals'];

const dimTypes: { name: string; icon: React.ReactNode }[] = [
  { name: 'Linear', icon: (
    <Ico w={20} h={18}>
      <path d="M0 12h20M3 8v8M17 8v8M1 14l4-4M15 14l4-4" />
      <text x="5" y="9" fontSize="8" fontWeight="bold" fill={INK} stroke="none">1.2</text>
    </Ico>
  ) },
  { name: 'Angle', icon: (
    <Ico w={24} h={18}>
      <path d="M1 14L11 5M1 14h10M8 5c4 0 6 5 5 9M11 12l2 2 2-2" />
      <text x="15" y="9" fontSize="10" fontWeight="bold" fill={INK} stroke="none">α</text>
    </Ico>
  ) },
  { name: 'Radial', icon: (
    <Ico w={28} h={18}>
      <path d="M3 4c8-3 11 9 1 12M2 10h5M4.500 7.500v5M10 6l5-3M13 6h-3V3" />
      <text x="15" y="7" fontSize="8" fontWeight="bold" fill={INK} stroke="none">1.2</text>
    </Ico>
  ) },
  { name: 'Level', icon: (
    <Ico w={26} h={18}>
      <circle cx="8" cy="11" r="4.500" /><path d="M8 11V6a5 5 0 0 0-5 5zM8 11v5a5 5 0 0 0 5-5z" fill={INK} /><path d="M8 4v14M1 11h14" />
      <text x="13" y="7" fontSize="8" fontWeight="bold" fill={INK} stroke="none">1.2</text>
    </Ico>
  ) },
  { name: 'Elevation', icon: (
    <Ico w={20} h={18}>
      <path d="M2 10h12l-6 6z" fill={INK} />
      <text x="6" y="7" fontSize="8" fontWeight="bold" fill={INK} stroke="none">1.2</text>
    </Ico>
  ) },
  { name: 'Door', icon: (
    <Ico w={28} h={18}><path d="M1 7h6v8H1zM1 15l6-8M21 7h6v8h-6zM21 15l6-8M8 9h3M8 12h3M17 9h3M17 12h3M14 5v12M12 11v6M16 11v6" /><circle cx="14" cy="3" r="2" /></Ico>
  ) },
  { name: 'Window', icon: (
    <Ico w={28} h={18}><path d="M1 7h6v8H1zM1 15l6-8M21 7h6v8h-6zM21 15l6-8M8 9h3M8 12h3M17 9h3M17 12h3M14 5v6M12 11h4M14 13v4" /><circle cx="14" cy="3" r="2" /></Ico>
  ) },
  { name: 'Area', icon: (
    <Ico w={24} h={18}>
      <path d="M2 13l5-6M2 17l9-10M6 17l8-9M11 17l3-3M15 17h1" strokeWidth={1.500} />
      <text x="0" y="6" fontSize="7" fontWeight="bold" fill={INK} stroke="none">1.2 m²</text>
    </Ico>
  ) },
];

const PreferencesDialog: React.FC = () => {
  const [standard, setStandard] = useState(0);

  return (
    <div role="dialog" aria-label="Project Preferences" className="absolute left-[898px] top-[182px] w-[442px] h-[645px] bg-[#f0f0f0] border border-[#a5a5a5] shadow-[0_3px_12px_rgba(0,0,0,0.3)] flex flex-col">
      <DialogTitle title="Project Preferences" faded />
      <div className="flex-1 flex flex-col pl-[15px] pr-4 pt-[15px] pb-[11px]">
        <div className="flex items-center">
          <Pick id="Category" value="Dimensions" w="w-[310px]" />
          <button disabled className={`${btnOff} w-[43px] ml-auto`}>&lt;&lt;</button>
          <button className={`${btn} w-[43px] ml-[2px]`}>&gt;&gt;</button>
        </div>
        <div className="pt-[13px]"><Rule /></div>

        <div className="flex pt-[14px] h-[139px]">
          <div role="listbox" aria-label="Standards" className="w-[233px] h-[110px] bg-white">
            {standards.map((name, i) => (
              <button
                key={name}
                role="option"
                aria-selected={i === standard}
                onClick={() => setStandard(i)}
                className={`block w-full h-[21px] text-left pl-[3px] ${i === standard ? 'bg-[#0078d7] text-white' : ''}`}
              >
                {name}
              </button>
            ))}
          </div>
          <div className="w-4 h-[110px] flex flex-col items-center justify-between py-[6px]">
            <Ico w={8} h={6} color="#b5b5b5"><path d="M1 5l3-3 3 3" strokeWidth={2} /></Ico>
            <Ico w={8} h={6} color="#b5b5b5"><path d="M1 1l3 3 3-3" strokeWidth={2} /></Ico>
          </div>
          <div className="ml-auto w-[148px] flex flex-col gap-[9px] pt-px">
            <button className={btnDefault}>Store as...</button>
            <button disabled className={btnOff}>Rename...</button>
            <button disabled className={btnOff}>Delete</button>
          </div>
        </div>
        <Rule />

        <div className="flex h-16">
          <div className="flex items-center pb-[2px] h-full">
            {dimTypes.map((type, i) => (
              <button
                key={type.name}
                aria-label={type.name}
                className={`h-6 w-[31px] flex items-center justify-center ${i === 0 ? 'bg-[#c0dcf3] border border-[#90c8f6]' : ''}`}
              >
                {type.icon}
              </button>
            ))}
          </div>
          <div className="ml-auto w-[149px] pt-[7px] flex flex-col">
            <label htmlFor="sample" className="h-[22px]">Sample:</label>
            <input id="sample" readOnly value="0.1" className="h-[23px] px-[3px] bg-[#f0f0f0] border border-t-[#a0a0a0] border-l-[#a0a0a0] border-r-white border-b-white" />
          </div>
        </div>
        <Rule />

        <div className="h-[134px] pt-[9px] flex flex-col gap-2">
          <div className="h-[22px] flex items-center">Linear Dimensions</div>
          <div className="h-[22px] flex items-center">
            <label htmlFor="Unit" className="w-[120px]">Unit:</label>
            <Pick id="Unit" value="millimeter" w="w-[289px]" />
          </div>
          <div className="h-[22px] flex items-center">
            <label htmlFor="Decimals" className="w-[120px]">Decimals:</label>
            <Pick id="Decimals" value="1" w="w-[90px]" />
          </div>
          <div className="h-[22px] flex items-center">
            <label htmlFor="Accuracy" className="w-[120px]">Extra Accuracy:</label>
            <Pick id="Accuracy" value="Off" w="w-[90px]" />
          </div>
        </div>
        <div className="flex h-[75px] items-start">
          {['Hide Zero Wholes', 'Hide Zero Decimals'].map((text) => (
            <label key={text} className="w-[220px] shrink-0 h-[13px] flex items-center gap-[3px]">
              <input type="checkbox" className="appearance-none w-[13px] h-[13px] border border-[#333333] bg-white" />
              {text}
            </label>
          ))}
        </div>
        <Rule />

        <div className="flex h-[99px] pt-3">
          <span className="w-[220px] h-[18px]">Witness Line Scalability:</span>
          <div className="flex flex-col gap-[7px]">
            {['Scaled', 'Fixed'].map((text, i) => (
              <label key={text} className="h-[18px] flex items-center gap-[3px]">
                <input
                  type="radio"
                  name="witness"
                  defaultChecked={i === 0}
                  className="appearance-none w-[13px] h-[13px] rounded-full border border-[#333333] bg-white checked:bg-[#333333] checked:shadow-[inset_0_0_0_2px_white]"
                />
                {text}
              </label>
            ))}
          </div>
        </div>
        <Rule />

        <div className="flex justify-end gap-3 pt-[15px]">
          <button className={`${btn} w-[88px]`}>Cancel</button>
          <button className={`${btn} w-[88px]`}>OK</button>
        </div>
      </div>

      {/* callouts drawn over the dialog */}
      <div className="absolute left-[4px] top-[291px] w-[433px] h-[127px] border-[5px] border-[#ff7f27] pointer-events-none" />
      <svg className="absolute left-[310px] top-[122px] pointer-events-none" width="62" height="170" viewBox="0 0 62 170" fill="none" stroke="#ff7f27" strokeWidth="5" strokeLinejoin="round" aria-hidden="true">
        <path d="M30.500 5L56 83H44v81H17.500V83H5z" />
      </svg>
    </div>
  );
};

const StoreDialog: React.FC = () => (
  <div role="dialog" aria-label="Store Standard" className="absolute left-[1427px] top-[262px] w-[222px] h-[132px] bg-[#f0f0f0] border border-[#6b6b6b] shadow-[0_3px_14px_rgba(0,0,0,0.4)] flex flex-col">
    <DialogTitle title="Store Standard" />
    <div className="flex-1 flex flex-col px-[15px] pt-[8px]">
      <label htmlFor="std-name" className="h-[22px]">Name:</label>
      <input id="std-name" defaultValue="Mill - 1 Decimal" className="h-[23px] px-[3px] bg-white border border-[#0078d7]" />
      <div className="flex justify-between pt-[15px] px-px">
        <button className={`${btn} w-[88px]`}>Cancel</button>
        <button className={`${btnDefault} w-[88px]`}>OK</button>
      </div>
    </div>
    <span className="absolute left-[97px] top-[64px] w-px h-[13px] bg-black" />
    <svg className="absolute right-[2px] bottom-[2px]" width="9" height="9" viewBox="0 0 9 9" fill="#b5b5b5" aria-hidden="true">
      <path d="M6 0h2v2H6zM3 3h2v2H3zM6 3h2v2H6zM0 6h2v2H0zM3 6h2v2H3zM6 6h2v2H6z" />
    </svg>
    <div className="absolute left-[2px] top-[34px] w-[213px] h-[57px] border-[5px] border-[#ff7f27] pointer-events-none" />
  </div>
);

/* ---------- page ---------- */

const menus = ['File', 'Edit', 'View', 'Design', 'Document', 'Options', 'Teamwork', 'Window', 'Help'];

const App: React.FC = () => (
  <div className="relative w-full h-screen flex flex-col overflow-hidden bg-white text-black text-[11px] leading-[18px] font-['Open_Sans','Noto_Sans',sans-serif]">
    <nav className="h-[19px] shrink-0 flex items-center pl-1 pt-[3px] gap-[15px] text-[#6d6d6d]">
      {menus.map((m) => <button key={m}>{m}</button>)}
      <div className="ml-auto flex items-center gap-[6px]">
        <Ico w={8} h={9} color="#999"><path d="M0 8h8" strokeWidth={2} /></Ico>
        <Ico w={9} h={9} color="#999"><path d="M1 3h5v5H1zM3 1h5v5" /></Ico>
        <Ico w={6} h={9} color="#999"><path d="M0 1l6 7M6 1L0 8" strokeWidth={1.800} /></Ico>
      </div>
    </nav>
    <TopToolbar />
    <InfoBox />
    <div className="flex-1 min-h-0 flex">
      <Toolbox />
      <main className="flex-1 min-w-0 flex flex-col">
        <TabBar />
        <Canvas />
        <QuickOptions />
      </main>
      <Navigator />
    </div>
    <footer className="h-5 shrink-0 flex items-center bg-[#f0f0f0] border-t border-[#d0d0d0]">
      <span className="flex-1 pt-[5px]">Enter First Node of Wall.</span>
      <Ico w={18} h={14}><path d="M1 9V1h12v3M5 5h12v8H5z" /><path d="M5 6h12M1 2h12" strokeWidth={2} /></Ico>
      <span className="w-px h-full bg-[#d0d0d0] ml-[3px]" />
      <span className="w-[129px] pl-4 text-[13px] text-[#333] whitespace-nowrap font-['Lato',sans-serif]">
        GRAPHISOFT <span className="font-light">ID</span>
      </span>
      <span className="w-px h-full bg-[#d0d0d0] mr-[18px]" />
    </footer>
    <PreferencesDialog />
    <StoreDialog />
  </div>
);

export default App;
